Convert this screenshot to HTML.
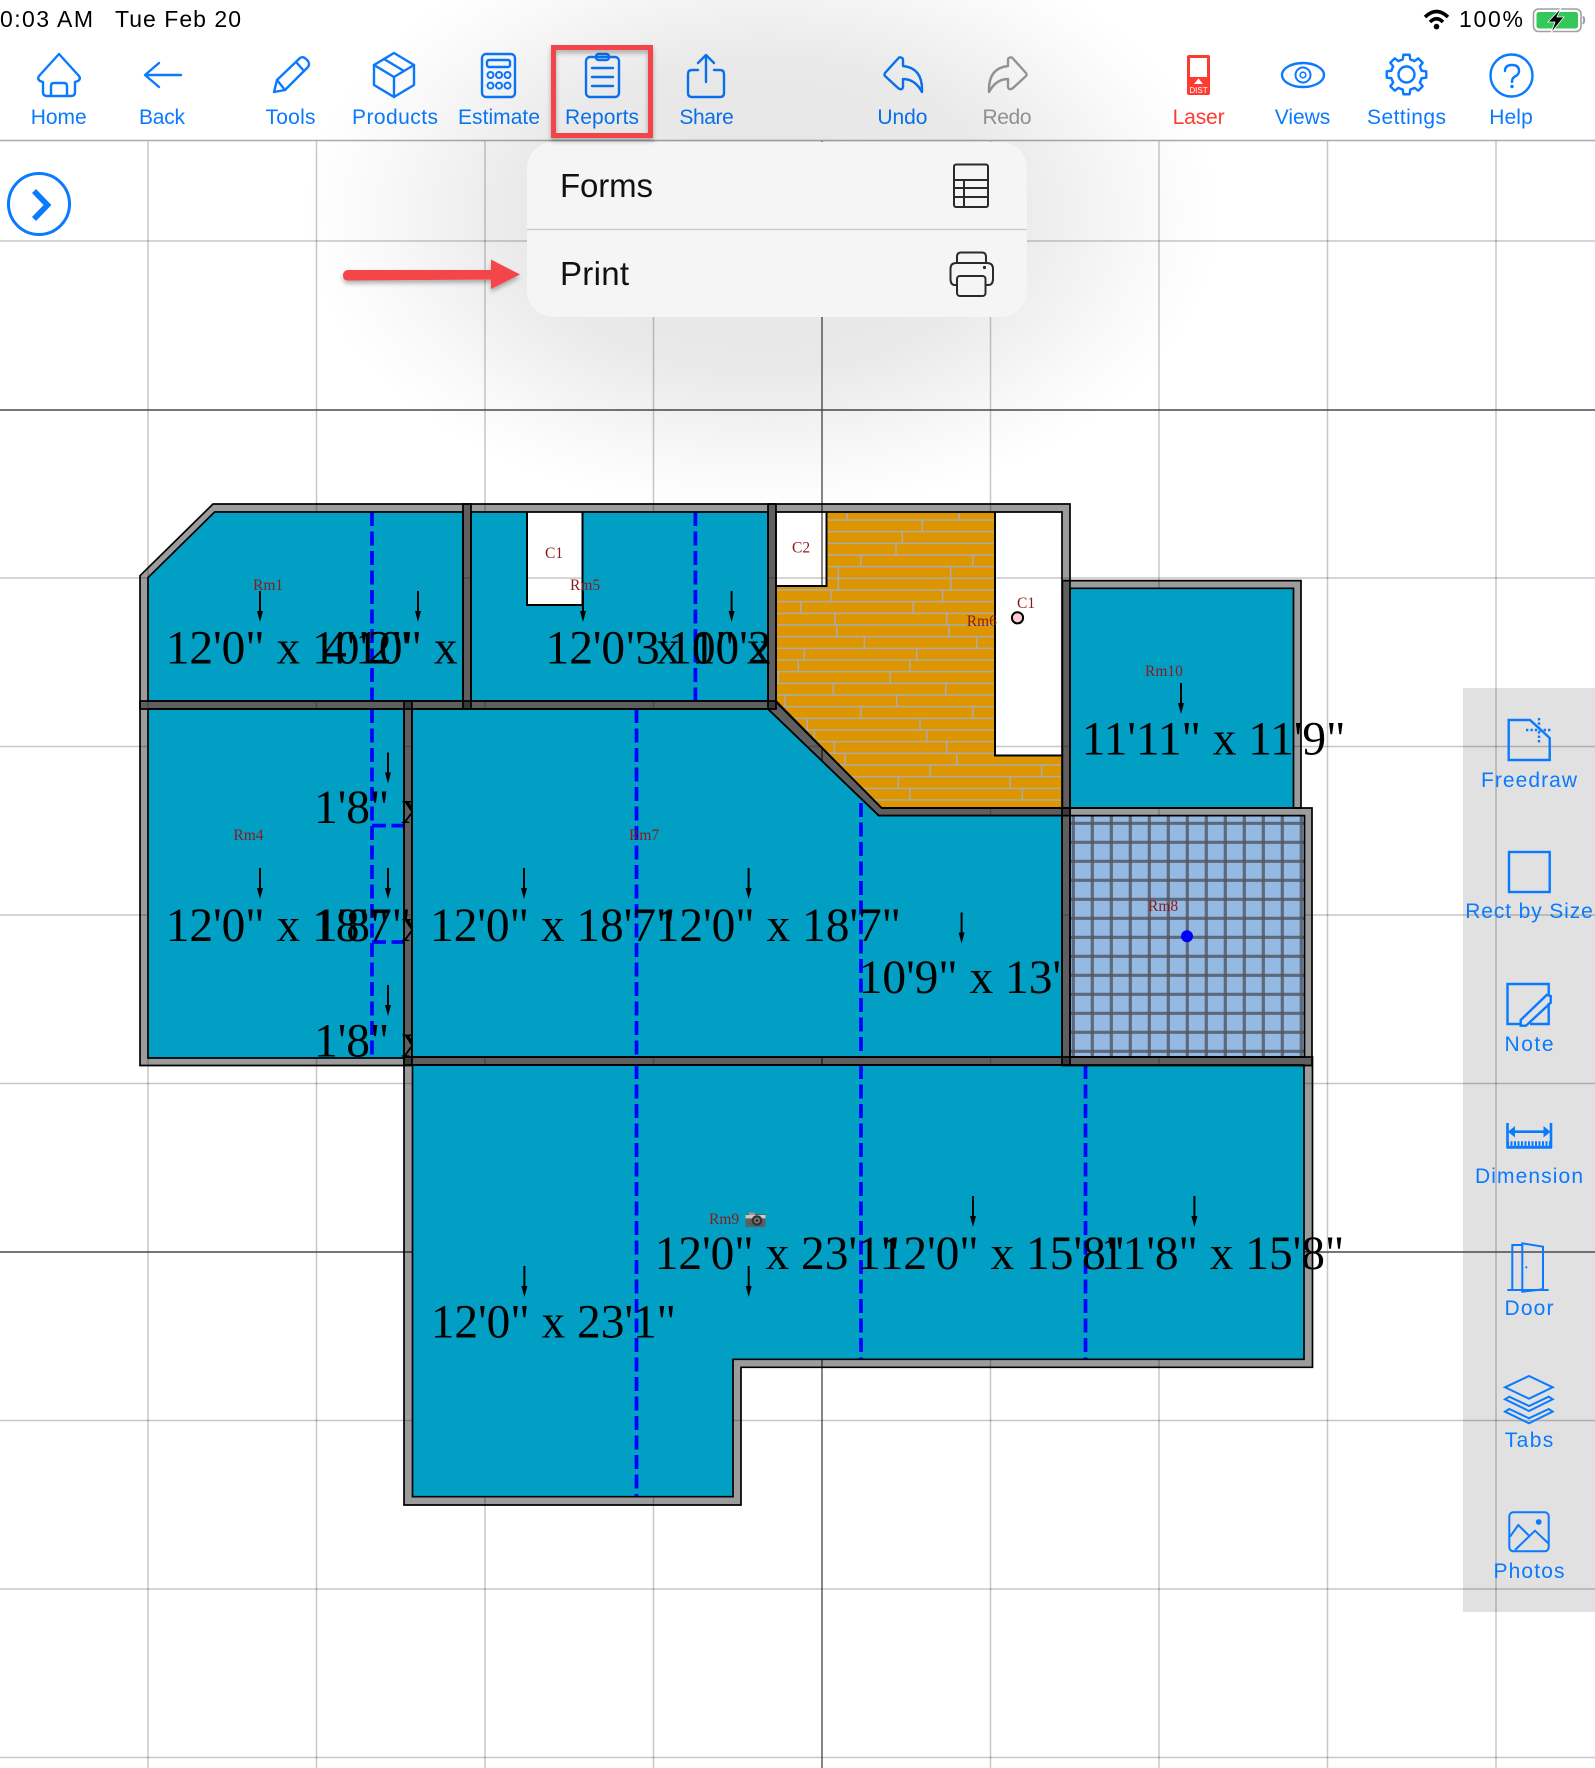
<!DOCTYPE html>
<html><head><meta charset="utf-8"><title>Floor plan</title>
<style>
html,body{margin:0;padding:0;background:#fff;width:1595px;height:1768px;overflow:hidden}
svg{position:absolute;left:0;top:0}
.shade{position:absolute;left:0;top:0;width:1595px;height:600px;background:radial-gradient(ellipse 460px 300px at 762px 215px,rgba(0,0,0,.1) 0,rgba(0,0,0,.088) 52%,rgba(0,0,0,.055) 68%,rgba(0,0,0,.024) 84%,rgba(0,0,0,0) 100%)}
.pop{position:absolute;left:527px;top:142px;width:500px;height:175px;border-radius:26px;background:#f5f5f5}
.b{font:47.4px "Liberation Serif",serif;fill:#000}
.r{font:15.5px "Liberation Serif",serif;fill:#8b1a1a}
.t{font:21px "Liberation Sans",sans-serif;fill:#0a7aff;text-anchor:middle}
.s{font:23px "Liberation Sans",sans-serif;fill:#000}
.i{fill:none;stroke:#0a7aff;stroke-width:2.4;stroke-linejoin:round;stroke-linecap:round}
.w{fill:rgba(0,0,0,.39);fill-rule:evenodd;stroke:#000;stroke-width:1.7}
.d{fill:none;stroke:#00f;stroke-width:3.7;stroke-dasharray:14 5.5}
</style></head><body>
<svg width="1595" height="1768" viewBox="0 0 1595 1768">
<defs>
<clipPath id="c1"><rect x="140" y="504" width="323" height="205"/></clipPath>
<clipPath id="c5"><rect x="471" y="504" width="300" height="205"/></clipPath>
<clipPath id="c4"><rect x="140" y="701" width="272" height="364"/></clipPath>
<clipPath id="c7"><rect x="412" y="709" width="650" height="356"/></clipPath>
<clipPath id="c6"><path d="M826.5 512H995V755.5H1062V808H881.6L776 702V586H826.5Z"/></clipPath>
<g id="a"><path d="M0 0V24" stroke="#000" stroke-width="2" fill="none"/><path d="M-3 20L0 31L3 20Z" fill="#000"/></g>
<path id="t" d="M-5.93 -14.32L-3.75 -15.04L-3.13 -19.75L3.13 -19.75L3.75 -15.04L5.93 -14.32"/>
<path id="un" d="M899 57.5Q903 57 903 60V66Q923 68 922 92Q915 79 903 79V87Q902 91 898 88L885 76Q884 75 885 73Z"/>
</defs>

<!-- side panel -->
<rect x="1463" y="688" width="132" height="924" fill="#e1e1e1"/>

<!-- grid -->
<g stroke="rgba(0,0,0,.22)" stroke-width="1.5" fill="none">
<path d="M148 140V1768M316.5 140V1768M485 140V1768M653.5 140V1768M990.5 140V1768M1159 140V1768M1327.5 140V1768M1496 140V1768"/>
<path d="M0 241H1595M0 578H1595M0 746.5H1595M0 915H1595M0 1083.5H1595M0 1420.5H1595M0 1589H1595M0 1757.5H1595"/>
</g>
<path d="M822 140V1768" stroke="#222" stroke-width="1.1"/>
<path d="M0 410H1595M0 1252H1595" stroke="#4a4a4a" stroke-width="1.4"/>
<path d="M0 140.5H1595" stroke="#ababab" stroke-width="1.5"/>

<!-- room fills -->
<g fill="#019fc3">
<path d="M214.6 512H463V701H148V577.6Z"/>
<path d="M471 512H527V605H582.5V512H768V701H471Z"/>
<path d="M148 709H404V1058H148Z"/>
<path d="M412 709H768L878.8 815.6H1062V1058H412Z"/>
<path d="M1070 588.3H1293.5V808H1070Z"/>
<path d="M412.5 1065H1304V1359H733V1497H412.5Z"/>
</g>
<path d="M826.5 512H995V755.5H1062V808H881.6L776 702V586H826.5Z" fill="#de9600"/>
<rect x="1070" y="815.6" width="234.5" height="241.4" fill="#94b9e3"/>

<!-- tile -->
<g stroke="rgba(80,85,95,.8)" stroke-width="3.2" fill="none">
<path d="M1073.3 815.6V1057M1092.3 815.6V1057M1111.3 815.6V1057M1130.3 815.6V1057M1149.3 815.6V1057M1168.3 815.6V1057M1187.3 815.6V1057M1206.3 815.6V1057M1225.3 815.6V1057M1244.3 815.6V1057M1263.3 815.6V1057M1282.3 815.6V1057M1301.3 815.6V1057"/>
<path d="M1070 823.3H1304.5M1070 842.3H1304.5M1070 861.3H1304.5M1070 880.3H1304.5M1070 899.3H1304.5M1070 918.3H1304.5M1070 937.3H1304.5M1070 956.3H1304.5M1070 975.3H1304.5M1070 994.3H1304.5M1070 1013.3H1304.5M1070 1032.3H1304.5M1070 1051.3H1304.5"/>
</g>

<!-- bricks -->
<g clip-path="url(#c6)" stroke="#ababab" stroke-width="1.5" fill="none">
<path d="M776 520H1062M776 531.67H1062M776 543.33H1062M776 555H1062M776 566.67H1062M776 578.33H1062M776 590H1062M776 601.67H1062M776 613.33H1062M776 625H1062M776 636.67H1062M776 648.33H1062M776 660H1062M776 671.67H1062M776 683.33H1062M776 695H1062M776 706.67H1062M776 718.33H1062M776 730H1062M776 741.67H1062M776 753.33H1062M776 765H1062M776 776.67H1062M776 788.33H1062M776 800H1062"/>
<path d="M847.3 512V520M959.3 512V520M922.3 520V531.7M902.3 531.7V543.3M896 543.3V555M860.7 555V566.7M972.7 555V566.7M838.3 566.7V590M950.7 566.7V590M831 590V601.7M942.7 590V601.7M800.7 601.7V613.3M913.3 601.7V613.3M835 613.3V625M946.7 613.3V625M836.7 625V636.7M949 625V636.7M864.3 636.7V648.3M976.7 636.7V648.3M804.3 648.3V660M916.7 648.3V660M798.3 660V671.7M910 660V671.7M778.3 671.7V683.3M890 671.7V683.3M833.3 683.3V695M945.7 683.3V695M785 695V706.7M896.7 695V706.7M860.7 706.7V718.3M972.7 706.7V718.3M807.3 718.3V730M920 718.3V730M814.3 730V741.7M926.7 730V741.7M834.3 741.7V753.3M946.7 741.7V753.3M845 753.3V765M956.7 753.3V765M930 765V776.7M1041.7 765V776.7M898.3 776.7V788.3M1010 776.7V788.3M910 788.3V800M1022.3 788.3V800"/>
</g>

<!-- blue dashed -->
<path class="d" d="M372 512V701M372 709V1058M372 825.6H404M372 942H404"/>
<path class="d" d="M695.4 512V701"/>
<path class="d" d="M636.5 709V1058M636.5 1065V1497"/>
<path class="d" d="M861 803V1058M861 1065V1359"/>
<path class="d" d="M1085.5 1065V1359"/>

<!-- closets -->
<g fill="none" stroke="#000" stroke-width="2">
<path d="M527 512V605H582.5V512"/>
<path d="M776 586H826.5V512"/>
<path d="M995 512V755.5H1062"/>
</g>

<!-- dimension text -->
<text x="165.7" y="663.7" class="b" clip-path="url(#c1)">12'0" x 10'2"</text>
<text x="323" y="663.7" class="b" clip-path="url(#c1)">4'10" x 10'2"</text>
<text x="545.5" y="663.7" class="b" clip-path="url(#c5)">12'0" x 10'2"</text>
<text x="636" y="663.7" class="b" clip-path="url(#c5)">3'10" x 10'2"</text>
<text x="165.7" y="941" class="b" clip-path="url(#c4)">12'0" x 18'7"</text>
<text x="314" y="823" class="b" clip-path="url(#c4)">1'8" x 3'4"</text>
<text x="314" y="941" class="b" clip-path="url(#c4)">1'8" x 18'7"</text>
<text x="314" y="1056.7" class="b" clip-path="url(#c4)">1'8" x 3'4"</text>
<text x="430" y="941" class="b">12'0" x 18'7"</text>
<text x="655.7" y="941" class="b">12'0" x 18'7"</text>
<text x="858.7" y="993" class="b" clip-path="url(#c7)">10'9" x 13'1"</text>
<text x="1081.7" y="754.4" class="b">11'11" x 11'9"</text>
<text x="430.7" y="1337.7" class="b">12'0" x 23'1"</text>
<text x="654.7" y="1269" class="b">12'0" x 23'1"</text>
<text x="879.7" y="1269" class="b">12'0" x 15'8"</text>
<text x="1100.7" y="1269" class="b">11'8" x 15'8"</text>

<!-- arrows -->
<use href="#a" x="260" y="591"/><use href="#a" x="418" y="591"/><use href="#a" x="583" y="591"/><use href="#a" x="731.6" y="591"/>
<use href="#a" x="388" y="752.5"/><use href="#a" x="388" y="868"/><use href="#a" x="388" y="985"/>
<use href="#a" x="260" y="868"/><use href="#a" x="524" y="868"/><use href="#a" x="748.6" y="868"/><use href="#a" x="961.6" y="912.5"/>
<use href="#a" x="1181" y="683"/>
<use href="#a" x="524.4" y="1266"/><use href="#a" x="748.7" y="1266"/><use href="#a" x="973" y="1196"/><use href="#a" x="1194.4" y="1196"/>

<!-- room labels -->
<text x="253" y="590" class="r">Rm1</text>
<text x="570" y="590" class="r">Rm5</text>
<text x="233.4" y="840" class="r">Rm4</text>
<text x="629" y="840" class="r">Rm7</text>
<text x="966.7" y="626" class="r">Rm6</text>
<text x="1145" y="676" class="r">Rm10</text>
<text x="1148" y="911" class="r">Rm8</text>
<text x="709" y="1224" class="r">Rm9</text>
<text x="545" y="558" class="r">C1</text>
<text x="792" y="552.7" class="r">C2</text>
<text x="1017" y="608" class="r">C1</text>
<rect x="745.5" y="1214" width="20" height="13" rx="1.5" fill="#5e5e5e"/>
<rect x="745.5" y="1215" width="20" height="3.4" fill="#c8c8c8"/>
<rect x="749" y="1212.6" width="6" height="2.4" fill="#9a9a9a"/>
<circle cx="757" cy="1220.5" r="5.3" fill="#333"/><circle cx="757" cy="1220.5" r="3" fill="#7c7c7c"/><circle cx="757" cy="1220.5" r="1.4" fill="#2a2a2a"/>
<circle cx="1017.5" cy="617.8" r="5.6" fill="#ffcdd2" stroke="#000" stroke-width="2"/>
<circle cx="1187" cy="936.3" r="6" fill="#00f"/>

<!-- walls -->
<path class="w" d="M213 504H471V709H140V575.7ZM214.6 512L148 577.6V701H463V512Z"/>
<path class="w" d="M463 504H776V709H463ZM471 512V701H768V512Z"/>
<path class="w" d="M768 504H1070V815.6H878.8L768 709ZM776 512V702L881.6 808H1062V512Z"/>
<path class="w" d="M1062.4 580.6H1301V808H1062.4ZM1070 588.3V808H1293.5V588.3Z"/>
<path class="w" d="M1062 808H1312V1065.5H1062ZM1070 815.6V1057H1304.5V815.6Z"/>
<path class="w" d="M140 701H412V1065.5H140ZM148 709V1058H404V709Z"/>
<path class="w" d="M404 701H776L881.6 808H1070V1065H404ZM412 709V1057H1062V815.6H878.8L768 709Z"/>
<path class="w" d="M404 1057H1312.5V1367.3H741V1505H404ZM412.5 1065V1496.7H733V1359.3H1304V1065Z"/>

<!-- status bar -->
<text x="0" y="27" class="s" textLength="93">0:03 AM</text>
<text x="115" y="27" class="s" textLength="126">Tue Feb 20</text>
<text x="1459" y="27" class="s" textLength="64">100%</text>
<g fill="none" stroke="#000" stroke-width="3.6"><path d="M1425 17Q1436.5 6 1448 17"/><path d="M1430 22Q1436.5 15.5 1443 22"/></g>
<circle cx="1436.5" cy="26.6" r="2.8" fill="#000"/>
<rect x="1533.5" y="9" width="47.5" height="22.5" rx="5" fill="none" stroke="#a0a0a0" stroke-width="1.6"/>
<rect x="1536.5" y="12" width="41.5" height="16.5" rx="2.5" fill="#34c759"/>
<path d="M1583 16.5Q1585.5 20 1583 24" fill="none" stroke="#a0a0a0" stroke-width="2"/>
<path d="M1561 8L1548 22H1555L1551 33L1564 17H1557Z" fill="#000" stroke="#fff" stroke-width=".8"/>

<!-- toolbar icons -->
<g class="i">
<path d="M59 54L79 76Q81 79 78 81L75 82V92Q75 96 71 96H47Q43 96 43 92V82L40 81Q37 79 39 76Z"/>
<path d="M51 96V86Q51 83 54 83H64Q67 83 67 86V96"/>
<path d="M146 75H181M159 63L145 75L159 87"/>
<path d="M274 92L277 80L300 58Q303 56 306 59L308 61Q310 64 308 67L285 90Z"/><path d="M296 62L304 71M277 80L285 90"/>
<path d="M394 53L414 65V85L394 97L374 85V65Z"/><path d="M374 65L394 77L414 65M394 77V97M384 59L404 71"/>
<rect x="482" y="54" width="33" height="43" rx="4"/><rect x="487" y="60" width="23" height="7" rx="2"/>
<g stroke-width="2"><circle cx="490.5" cy="75" r="3"/><circle cx="499" cy="75" r="3"/><circle cx="507.5" cy="75" r="3"/><circle cx="490.5" cy="85.6" r="3"/><circle cx="499" cy="85.6" r="3"/><circle cx="507.5" cy="85.6" r="3"/></g>
<rect x="586" y="57" width="33" height="40" rx="4"/><rect x="596" y="54" width="13" height="6" rx="2.5"/><path d="M592 68H613M592 77H613M592 86H613"/>
<path d="M706 56V82M698 63L706 55L714 63"/><path d="M698 70H692Q688 70 688 74V93Q688 97 692 97H720Q724 97 724 93V74Q724 70 720 70H714"/>
<use href="#un"/>
<ellipse cx="1303" cy="75" rx="21" ry="12"/><circle cx="1303" cy="75" r="7.5" stroke-width="2"/><circle cx="1303" cy="75" r="2.8" stroke-width="1.6"/>
<g transform="translate(1406.5 74.5)"><use href="#t"/><use href="#t" transform="rotate(45)"/><use href="#t" transform="rotate(90)"/><use href="#t" transform="rotate(135)"/><use href="#t" transform="rotate(180)"/><use href="#t" transform="rotate(225)"/><use href="#t" transform="rotate(270)"/><use href="#t" transform="rotate(315)"/><circle r="8"/></g>
<circle cx="1511.5" cy="75.5" r="21"/>
<path d="M1505 71Q1505 65 1512 65Q1519 65 1519 71Q1519 74.5 1515 76.5Q1512 78 1512 82"/>
</g>
<circle cx="1512" cy="86.5" r="1.7" fill="#0a7aff"/>
<use href="#un" transform="translate(1911 0) scale(-1 1)" fill="none" stroke="#9a9a9a" stroke-width="2.4" stroke-linejoin="round"/>
<rect x="1187" y="55" width="23" height="40" rx="2" fill="#ff3b30"/><rect x="1190" y="58" width="17" height="19" fill="#fff"/><path d="M1198.5 78.5L1194 84H1203Z" fill="#fff"/>
<text x="1198.5" y="93" font-family="Liberation Sans,sans-serif" font-size="8" fill="#fff" text-anchor="middle">DIST</text>

<!-- toolbar labels -->
<text x="58.7" y="124" class="t" textLength="56">Home</text>
<text x="162" y="124" class="t" textLength="46">Back</text>
<text x="290.5" y="124" class="t" textLength="50">Tools</text>
<text x="395" y="124" class="t" textLength="86">Products</text>
<text x="499" y="124" class="t" textLength="82">Estimate</text>
<text x="602" y="124" class="t" textLength="74">Reports</text>
<text x="706.6" y="124" class="t" textLength="54.5">Share</text>
<text x="902.4" y="124" class="t" textLength="50">Undo</text>
<text x="1007" y="124" class="t" textLength="49" style="fill:#9a9a9a">Redo</text>
<text x="1198.6" y="124" class="t" textLength="52" style="fill:#ff3b30">Laser</text>
<text x="1302.5" y="124" class="t" textLength="55.5">Views</text>
<text x="1406.5" y="124" class="t" textLength="79">Settings</text>
<text x="1511" y="124" class="t" textLength="43.5">Help</text>

<circle cx="39" cy="204" r="30.5" fill="none" stroke="#0a7aff" stroke-width="3"/>
<path d="M34 191L47.5 205L34 219" fill="none" stroke="#0a7aff" stroke-width="5.6"/>

<!-- side icons -->
<g class="i" style="stroke-linejoin:miter;stroke-linecap:butt" stroke-width="2.4">
<path d="M1530 720H1508.7V760H1549.7V738Z"/>
<path d="M1526 730H1551M1539 718V743" stroke-dasharray="2.4 2"/>
<rect x="1509" y="852" width="40.7" height="40"/>
<path d="M1548.7 995V984H1507.5V1024H1520M1530 1024H1548.7V1003"/>
<path d="M1520.7 1020L1546.7 995L1550.7 996V1002.7L1526 1025.7H1520.7Z"/>
<path d="M1507.5 1123V1148M1551 1123V1148M1512 1131.7H1547" stroke-width="2.6"/>
<path d="M1507 1143.5H1552" stroke-width="4.6" stroke-dasharray="2 1.5"/>
<path d="M1506.5 1147.3H1552" stroke-width="3"/>
<path d="M1512.3 1290V1245H1522.7" stroke-width="2"/>
<path d="M1522.3 1243.3L1543 1246.7V1289.3L1522.3 1291.7Z" stroke-width="2"/>
<path d="M1507.3 1290H1548.7" stroke-width="2"/>
<path d="M1505 1387.3L1529 1376L1552.7 1387.3L1529 1398.7Z" stroke-width="2"/>
<path d="M1509.3 1396.7L1505 1399.3L1529 1411L1552.7 1399.3L1548.7 1396.7L1529 1406Z" stroke-width="2"/>
<path d="M1509.3 1409L1505 1411.6L1529 1423.3L1552.7 1411.6L1548.7 1409L1529 1418.3Z" stroke-width="2"/>
<rect x="1509.3" y="1512.3" width="39.4" height="39" rx="4" stroke-width="2"/>
<path d="M1510 1536.7L1518.3 1525L1529 1535.7M1515 1550L1535 1530.7L1548.3 1543.3" stroke-width="2"/>
</g>
<path d="M1508 1131.7L1515 1126V1137.5ZM1550.5 1131.7L1543.5 1126V1137.5Z" fill="#0a7aff"/>
<circle cx="1526.3" cy="1267.3" r="1.1" fill="#0a7aff"/>
<circle cx="1538.7" cy="1522" r="2.9" fill="#0a7aff"/>

<text x="1529" y="787" class="t" textLength="96">Freedraw</text>
<text x="1529" y="918" class="t" textLength="127.5">Rect by Size</text>
<text x="1529" y="1051" class="t" textLength="49">Note</text>
<text x="1529" y="1183" class="t" textLength="108">Dimension</text>
<text x="1529" y="1315" class="t" textLength="49">Door</text>
<text x="1529" y="1447" class="t" textLength="48.5">Tabs</text>
<text x="1529" y="1578" class="t" textLength="71">Photos</text>
</svg>

<div class="shade"></div>
<div class="pop"></div>

<svg width="1595" height="1768" viewBox="0 0 1595 1768">
<defs><filter id="sh" x="-10%" y="-50%" width="120%" height="200%"><feDropShadow dx="0" dy="3" stdDeviation="2.5" flood-color="#000" flood-opacity=".3"/></filter></defs>
<rect x="553.5" y="47.5" width="97" height="88" fill="none" stroke="#f2444a" stroke-width="5" filter="url(#sh)"/>
<path d="M348 270H491V259.5L520 274.5L491 289V279.5L348 280.5Q343 280.5 343 275.5Q343 270.5 348 270Z" fill="#f4444a" filter="url(#sh)"/>
<text x="560" y="197" font-family="Liberation Sans,sans-serif" font-size="33" fill="#111" textLength="93">Forms</text>
<text x="560" y="285" font-family="Liberation Sans,sans-serif" font-size="33" fill="#111" textLength="69">Print</text>
<path d="M527 229.5H1027" stroke="#c9c9c9" stroke-width="1.2"/>
<g fill="none" stroke="#2a2a2a" stroke-width="2">
<rect x="954" y="164.5" width="34" height="42.5" rx="2"/>
<path d="M954 180H988M954 188H988M954 197H988M964 180V207"/>
<path d="M957 263V257Q957 252.5 961 252.5H982Q986 252.5 986 257V263"/>
<path d="M957 285H955Q950.5 285 950.5 279V269Q950.5 263 956 263H987Q993 263 993 269V279Q993 285 988 285H986"/>
<rect x="957" y="276" width="28.5" height="20" rx="3" fill="#f5f5f5"/>
</g>
<circle cx="984.5" cy="267.5" r="1.6" fill="#2a2a2a"/>
</svg>
</body></html>
